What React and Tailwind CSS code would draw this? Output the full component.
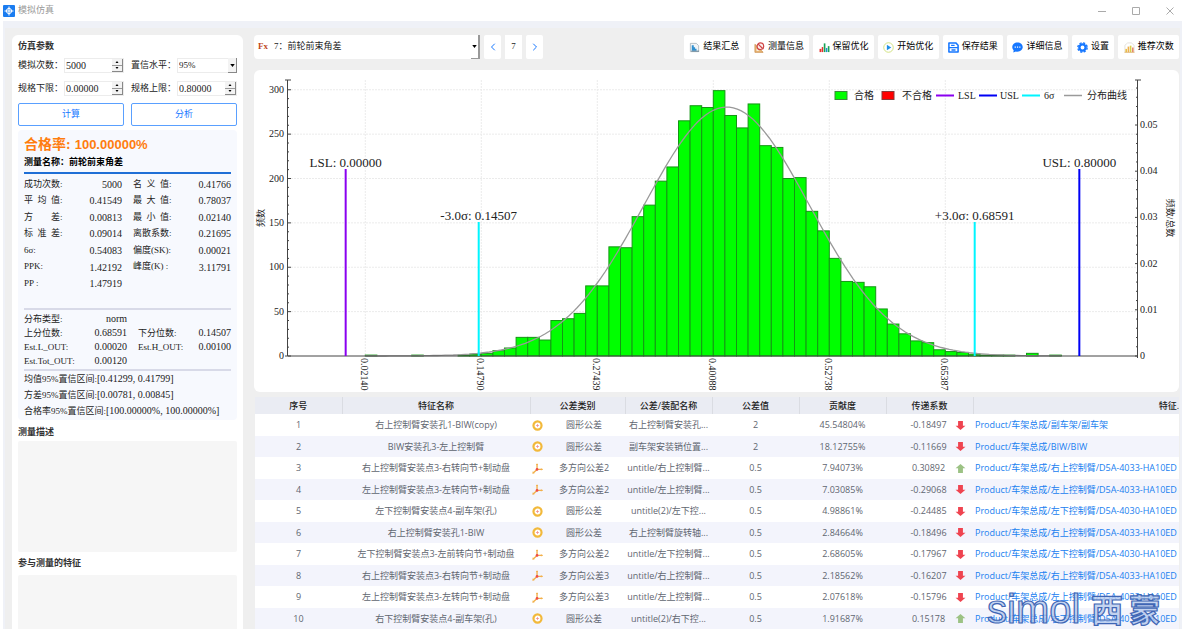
import { useState } from "react";
import { ChevronLeft, ChevronRight } from "lucide-react";

const BINS = [
  1, 0, 0, 0, 1, 0, 0, 0, 1, 2, 3, 6, 9, 21, 21, 18, 40, 42, 48, 79, 79, 123, 122, 157, 170, 197, 213, 265, 282, 280,
  299, 271, 257, 284, 237, 235, 200, 201, 163, 141, 110, 84, 83, 78, 53, 36, 25, 17, 15, 7, 5, 4, 2, 1, 1, 1, 0, 3, 0, 1,
];

const STATS = [
  ["成功次数:", "5000", "名\u2002义\u2002值:", "0.41766"],
  ["平\u2002均\u2002值:", "0.41549", "最\u2002大\u2002值:", "0.78037"],
  ["方\u3000\u3000差:", "0.00813", "最\u2002小\u2002值:", "0.02140"],
  ["标\u2002准\u2002差:", "0.09014", "离散系数:", "0.21695"],
  ["6σ:", "0.54083", "偏度(SK):", "0.00021"],
  ["PPK:", "1.42192", "峰度(K) :", "3.11791"],
  ["PP :", "1.47919", "", ""],
];

const DIST = [
  ["分布类型:", "norm", "", ""],
  ["上分位数:", "0.68591", "下分位数:", "0.14507"],
  ["Est.L_OUT:", "0.00020", "Est.H_OUT:", "0.00100"],
  ["Est.Tot_OUT:", "0.00120", "", ""],
];

const INTERVALS = [
  ["均值95%置信区间:", "[0.41299, 0.41799]"],
  ["方差95%置信区间:", "[0.00781, 0.00845]"],
  ["合格率95%置信区间:", "[100.00000%, 100.00000%]"],
];

const ROWS = [
  ["右上控制臂安装孔1-BIW(copy)", "圆形公差", "右上控制臂安装孔...", "2", "45.54804%", "-0.18497", "Product/车架总成/副车架/副车架"],
  ["BIW安装孔3-左上控制臂", "圆形公差", "副车架安装销位置...", "2", "18.12755%", "-0.11669", "Product/车架总成/BIW/BIW"],
  ["右上控制臂安装点3-右转向节+制动盘", "多方向公差2", "untitle/右上控制臂...", "0.5", "7.94073%", "0.30892", "Product/车架总成/右上控制臂/D5A-4033-HA10ED"],
  ["左上控制臂安装点3-左转向节+制动盘", "多方向公差2", "untitle/左上控制臂...", "0.5", "7.03085%", "-0.29068", "Product/车架总成/左上控制臂/D5A-4033-HA10ED"],
  ["左下控制臂安装点4-副车架(孔)", "圆形公差", "untitle(2)/左下控...", "0.5", "4.98861%", "-0.24485", "Product/车架总成/左下控制臂/D5A-4030-HA10ED"],
  ["右上控制臂安装孔1-BIW", "圆形公差", "右上控制臂旋转轴...", "0.5", "2.84664%", "-0.18496", "Product/车架总成/右上控制臂/D5A-4033-HA10ED"],
  ["左下控制臂安装点3-左前转向节+制动盘", "多方向公差2", "untitle/左下控制臂...", "0.5", "2.68605%", "-0.17967", "Product/车架总成/左下控制臂/D5A-4030-HA10ED"],
  ["右上控制臂安装点3-右转向节+制动盘", "多方向公差3", "untitle/右上控制臂...", "0.5", "2.18562%", "-0.16207", "Product/车架总成/右上控制臂/D5A-4033-HA10ED"],
  ["左上控制臂安装点3-左转向节+制动盘", "多方向公差3", "untitle/左上控制臂...", "0.5", "2.07618%", "-0.15796", "Product/车架总成/左上控制臂/D5A-4033-HA10ED"],
  ["右下控制臂安装点4-副车架(孔)", "圆形公差", "untitle(2)/右下控...", "0.5", "1.91687%", "0.15178", "Product/车架总成/右下控制臂/D5A-4030-HA10ED"],
];

const HEADERS = ["序号", "特征名称", "公差类别", "公差/装配名称", "公差值", "贡献度", "传递系数"];

// ---- toolbar icons, all on a 12x12 grid ----

const ICONS = {
  summary: (
    <>
      <path d="M1.5 1.5h6.5l2.5 2.5v6.5h-9z" fill="#f2f5f7" stroke="#a9b4bb" strokeWidth=".9" />
      <path d="M3 9.5v-6h2.2v2.2h1.4v1.6h1.6v2.2z" fill="#2f8fcf" />
      <path d="M2.5 10h8.5" stroke="#5f7d92" strokeWidth="1" />
    </>
  ),
  measure: (
    <>
      <path d="M1 2.5v8.8h9z" fill="#eab879" stroke="#c98a45" strokeWidth=".8" />
      <path d="M2.8 7v2.6h2.8z" fill="#fff" />
      <circle cx="7" cy="4.6" r="3.6" fill="#fbecec" stroke="#cf4444" strokeWidth="1.3" />
      <path d="M4.6 2.3l4.8 4.8" stroke="#cf4444" strokeWidth="1.3" />
    </>
  ),
  keep: (
    <>
      <path d="M.6 7.5h2V11h-2z" fill="#e5322d" />
      <path d="M3 5.5h1.6V11H3z" fill="#e5322d" />
      <path d="M5.2 1.5h1.8V11H5.2z" fill="#17a457" />
      <path d="M7.5 6.5h1.6V11H7.5z" fill="#1f8fd0" />
      <path d="M9.6 4.5h1.8V11H9.6z" fill="#17a457" />
    </>
  ),
  start: (
    <>
      <circle cx="6" cy="6" r="5.2" fill="#fff" stroke="#cfe07a" strokeWidth="1" />
      <path d="M4.2 3v6L9 6z" fill="#1e90e6" />
    </>
  ),
  save: (
    <>
      <path d="M1 1h7.5L11 3.5V11H1z" fill="none" stroke="#1677ff" strokeWidth="1.7" strokeLinejoin="round" />
      <path d="M3.4 3.7h3.8M1 6.2h10M3.8 8.7h4.4" stroke="#1677ff" strokeWidth="1.5" />
    </>
  ),
  detail: (
    <>
      <path d="M6 .5c3.2 0 5.7 2.2 5.7 5S9.2 10.6 6 10.6c-.6 0-1.2-.1-1.7-.2L1.4 11.5l.4-2.5C.8 8.1.3 6.9.3 5.5.3 2.7 2.8.5 6 .5z" fill="#1677ff" />
      <path d="M2.9 5.6h1.3M5.4 5.6h1.3M7.9 5.6h1.3" stroke="#fff" strokeWidth="1.3" />
    </>
  ),
  settings: (
    <>
      <circle cx="6" cy="6" r="3.4" fill="none" stroke="#1677ff" strokeWidth="2.6" />
      <circle cx="6" cy="6" r="5.1" fill="none" stroke="#1677ff" strokeWidth="1.5" strokeDasharray="2.4 1.605" />
    </>
  ),
  recommend: (
    <>
      <path d="M1 11V3.5L4 1h4l3 2.5V11" fill="none" stroke="#dcd9d2" strokeWidth=".8" />
      <path d="M1.5 7.5h1.8V11H1.5z" fill="#e9c04a" />
      <path d="M3.9 5h1.8v6H3.9z" fill="#efb04f" />
      <path d="M6.3 4h1.8v7H6.3z" fill="#d9cf4c" />
      <path d="M8.7 6h1.8v5H8.7z" fill="#e88a6c" />
      <path d="M.5 11.3h11" stroke="#d7a657" strokeWidth=".8" />
    </>
  ),
};

const TOOLS = [
  ["summary", "结果汇总"],
  ["measure", "测量信息"],
  ["keep", "保留优化"],
  ["start", "开始优化"],
  ["save", "保存结果"],
  ["detail", "详细信息"],
  ["settings", "设置"],
  ["recommend", "推荐次数"],
];

function CircleTolIcon() {
  return (
    <svg viewBox="0 0 12 12" className="size-[11px] shrink-0">
      <circle cx="6" cy="6" r="4.4" fill="#fff" stroke="#f2b93b" strokeWidth="2.4" />
      <path d="M6 4.3v3.4M4.3 6h3.4" stroke="#f08a8a" strokeWidth=".8" />
    </svg>
  );
}

function AxisTolIcon() {
  return (
    <svg viewBox="0 0 12 12" className="size-[11px] shrink-0">
      <path d="M5.5 1v6h6M5.5 7L1.3 10.8" fill="none" stroke="#f2b04a" strokeWidth="1.5" />
      <circle cx="5.5" cy="7" r="1.5" fill="#ef4b4b" />
      <path d="M4.3 2.3l1.2-2 1.2 2zM9.7 5.8l2.2 1.2-2.2 1.2zM.3 11.8l.6-2.8 2 2.2z" fill="#f2b04a" />
    </svg>
  );
}

function TrendIcon({ up }) {
  return (
    <svg viewBox="0 0 10 10" className="size-[11px] shrink-0">
      {up ? (
        <path d="M5 1l4.5 3.8H7.2V9H2.8V4.8H.5z" fill="#9cc284" />
      ) : (
        <path d="M5 9L.5 5.2h2.3V1h4.4v4.2h2.3z" fill="#ef4450" />
      )}
    </svg>
  );
}

function SpinBox({ id, label, initial, step, digits }) {
  const [value, setValue] = useState(initial);
  const bump = (d) => setValue((Number(value) + d * step).toFixed(digits));

  return (
    <div className="flex h-[15px] items-center">
      <label htmlFor={id} className="w-[46px] shrink-0 text-[9px]">{label}</label>
      <div className="flex h-full min-w-0 flex-1 border border-[#ececec] bg-white">
        <input
          id={id}
          value={value}
          onChange={(e) => setValue(e.target.value)}
          className="w-0 min-w-0 flex-1 pl-px text-[10px] outline-none"
        />
        <div className="flex w-[11px] flex-col border-r border-b border-[#888]">
          <button aria-label={`${label} +`} onClick={() => bump(1)} className="flex flex-1 items-center justify-center border-b border-[#999] bg-[#f3f3f3]">
            <svg viewBox="0 0 6 4" className="h-[2px] w-[4px]"><path d="M3 0l3 4H0z" /></svg>
          </button>
          <button aria-label={`${label} -`} onClick={() => bump(-1)} className="flex flex-1 items-center justify-center bg-[#f3f3f3]">
            <svg viewBox="0 0 6 4" className="h-[2px] w-[4px]"><path d="M3 4L0 0h6z" /></svg>
          </button>
        </div>
      </div>
    </div>
  );
}

function StatRow({ row, cols }) {
  return (
    <div className={`grid items-center justify-between ${cols}`}>
      <div className="flex items-center justify-between">
        <span className="text-[9px]">{row[0]}</span>
        <span>{row[1]}</span>
      </div>
      <div className="flex items-center justify-between">
        <span className="text-[9px]">{row[2]}</span>
        <span>{row[3]}</span>
      </div>
    </div>
  );
}

function SidePanel() {
  return (
    <aside className="flex w-[231px] shrink-0 flex-col rounded-t-md bg-white px-1.5 pt-1">
      <h2 className="text-[9px] leading-[14px] font-bold text-[#333]">仿真参数</h2>
      <div className="mt-[5px] grid grid-cols-2 gap-x-[7px] gap-y-2">
        <SpinBox id="times" label="模拟次数：" initial="5000" step={100} digits={0} />
        <div className="flex h-[15px] items-center">
          <label htmlFor="confidence" className="w-[46px] shrink-0 text-[9px]">置信水平：</label>
          <div className="relative h-full min-w-0 flex-1">
            <select id="confidence" className="block h-full w-full appearance-none border border-[#ececec] bg-white pl-px text-[9px] leading-[13px] outline-none">
              <option>95%</option>
              <option>99%</option>
            </select>
            <span className="pointer-events-none absolute inset-y-0 right-0 flex w-[9px] items-center justify-center border-r border-b border-[#888] bg-[#f3f3f3]">
              <svg viewBox="0 0 6 4" className="h-[3px] w-[5px]"><path d="M3 4L0 0h6z" /></svg>
            </span>
          </div>
        </div>
        <SpinBox id="lower" label="规格下限：" initial="0.00000" step={0.1} digits={5} />
        <SpinBox id="upper" label="规格上限：" initial="0.80000" step={0.1} digits={5} />
      </div>
      <div className="mt-[7px] grid grid-cols-2 gap-[7px] text-[9px] text-[#1677ff]">
        <button className="h-[23px] rounded-xs border border-[#5aa0ff]">计算</button>
        <button className="h-[23px] rounded-xs border border-[#5aa0ff]">分析</button>
      </div>

      <section className="mt-1 rounded bg-[#f7f9fe] px-1.5 pt-1.5 pb-px text-[10px]">
        <div className="flex items-center gap-1 text-[14px] leading-[18px] font-bold text-[#ff7d0f]">
          <span>合格率:</span>
          <span className="font-['Liberation_Sans',sans-serif] text-[13px]">100.00000%</span>
        </div>
        <div className="mt-px border-b-2 border-[#1f6fd6] pb-[3px] text-[9px] leading-[14px] font-bold text-black">
          测量名称：前轮前束角差
        </div>
        <div className="mt-0.5 grid h-[116px]">
          {STATS.map((row) => (
            <StatRow key={row[0]} row={row} cols="grid-cols-[98px_98px]" />
          ))}
        </div>
        <div className="mt-4 border-y-2 border-[#d8dae8] pt-0.5 pb-px leading-[14px]">
          {DIST.map((row) => (
            <StatRow key={row[0]} row={row} cols="grid-cols-[103px_93px]" />
          ))}
        </div>
        {INTERVALS.map(([name, range]) => (
          <div key={name} className="flex items-center leading-4">
            <span className="text-[9px]">{name}</span>
            <span>{range}</span>
          </div>
        ))}
      </section>

      <label htmlFor="desc" className="mt-[5px] text-[9px] leading-[14px] font-bold text-[#333]">测量描述</label>
      <textarea id="desc" className="mt-0.5 h-[111px] shrink-0 resize-none rounded-xs bg-[#f6f6f6] outline-none" />
      <label htmlFor="features" className="mt-1 text-[9px] leading-[14px] font-bold text-[#333]">参与测量的特征</label>
      <textarea id="features" className="mt-[5px] min-h-0 flex-1 resize-none rounded-t-xs bg-[#f6f6f6] outline-none" />
    </aside>
  );
}

function Toolbar() {
  return (
    <div className="flex h-6 items-stretch gap-1 text-[9px]">
      <div className="relative w-[226px]">
        <span className="pointer-events-none absolute inset-y-0 left-1 flex items-center text-[9px] font-bold text-[#c0481c]">Fx</span>
        <select aria-label="测量名称" className="block h-full w-full appearance-none rounded bg-white pl-5 text-[9px] outline-none">
          <option>7：前轮前束角差</option>
        </select>
        <span className="pointer-events-none absolute inset-y-0 right-0 flex w-[9px] items-center justify-center border-r-2 border-b border-[#999] bg-white">
          <svg viewBox="0 0 6 4" className="h-[3px] w-[5px]"><path d="M3 4L0 0h6z" /></svg>
        </span>
      </div>
      <button aria-label="上一个" className="flex w-[17px] items-center justify-center rounded-xs bg-white text-[#1677ff]">
        <ChevronLeft size={12} />
      </button>
      <span className="flex w-[17px] items-center justify-center bg-white">7</span>
      <button aria-label="下一个" className="flex w-[17px] items-center justify-center rounded-xs bg-white text-[#1677ff]">
        <ChevronRight size={12} />
      </button>
      <div className="ml-auto flex w-[495px] gap-1">
        {TOOLS.map(([icon, name]) => (
          <button key={icon} className="flex flex-auto items-center justify-center gap-[3px] rounded-xs bg-white px-[5px] text-black">
            <svg viewBox="0 0 12 12" className="size-[11px]">{ICONS[icon]}</svg>
            {name}
          </button>
        ))}
      </div>
    </div>
  );
}

const BASE = 286;
const UNIT = 0.8875;
const X0 = 111.3;
const BIN_W = 11.6;
const xOf = (v) => X0 + ((v - 0.0214) / 0.12649) * 116;

const curve = Array.from({ length: 175 }, (_, i) => {
  const x = X0 + i * 4;
  const z = (x - xOf(0.41549)) / 82.6;
  return `${x.toFixed(1)},${(BASE - 280.5 * UNIT * Math.exp((-z * z) / 2)).toFixed(1)}`;
}).join(" ");

function Marker({ value, top, color, label }) {
  const x = xOf(value);
  return (
    <g>
      <line x1={x} x2={x} y1={top} y2={BASE} stroke={color} strokeWidth="2" />
      <text x={x} y={top - 2} textAnchor="middle" fontSize="13">{label}</text>
    </g>
  );
}

function Histogram() {
  const legend = [
    [682, "#8a00f0", 704, "LSL"],
    [725, "#0000f5", 746, "USL"],
    [768, "#00f5ff", 790, "6σ"],
    [810, "#9a9a9a", 833, "分布曲线"],
  ];
  return (
    <svg viewBox="0 0 925 322" className="block h-auto w-full rounded-md bg-white" fill="#222">
      <g stroke="#ebebeb" strokeDasharray="2 1">
        {[50, 100, 150, 200, 250, 300].map((v) => (
          <line key={v} x1="34" x2="883" y1={BASE - v * UNIT} y2={BASE - v * UNIT} />
        ))}
        {[0, 1, 2, 3, 4, 5].map((i) => (
          <line key={i} x1={X0 + i * 116} x2={X0 + i * 116} y1="10" y2={BASE} />
        ))}
      </g>
      <g fill="#00ff00" stroke="#149614" strokeWidth="1">
        {BINS.map((n, i) =>
          n > 0 ? <rect key={i} x={X0 + i * BIN_W} y={BASE - n * UNIT} width={BIN_W} height={n * UNIT} /> : null
        )}
      </g>
      <polyline points={curve} fill="none" stroke="#999" strokeWidth="1.3" />

      <g stroke="#444">
        <path d="M33.5 286V10M31 10h6M31 286h852M883.5 288V10M881 10h6" fill="none" />
        {Array.from({ length: 31 }, (_, i) => (
          <line key={i} x1="34" x2={i % 5 ? 35 : 37} y1={BASE - i * 10 * UNIT} y2={BASE - i * 10 * UNIT} />
        ))}
        {Array.from({ length: 30 }, (_, i) => (
          <line key={i} x1={i % 5 ? 882 : 881} x2="884" y1={BASE - i * 9.24} y2={BASE - i * 9.24} />
        ))}
      </g>
      <g fontSize="10">
        {[0, 50, 100, 150, 200, 250, 300].map((v) => (
          <text key={v} x="30" y={BASE - v * UNIT + 3} textAnchor="end">{v}</text>
        ))}
        {["0", "0.01", "0.02", "0.03", "0.04", "0.05"].map((v, i) => (
          <text key={v} x="886" y={BASE - i * 46.2 + 3}>{v}</text>
        ))}
        {["0.02140", "0.14790", "0.27439", "0.40088", "0.52738", "0.65387"].map((v, i) => (
          <text key={v} transform={`translate(${X0 + i * 116 - 4} 288) rotate(90)`}>{v}</text>
        ))}
      </g>
      <text transform="translate(10 148) rotate(-90)" textAnchor="middle" fontSize="9">频数</text>
      <text transform="translate(913 148) rotate(90)" textAnchor="middle" fontSize="9">频数/总数</text>

      <Marker value={0} top={99} color="#8a00f0" label="LSL: 0.00000" />
      <Marker value={0.14507} top={152} color="#00f5ff" label="-3.0σ: 0.14507" />
      <Marker value={0.68591} top={152} color="#00f5ff" label="+3.0σ: 0.68591" />
      <Marker value={0.8} top={99} color="#0000f5" label="USL: 0.80000" />

      <g fontSize="10">
        <rect x="581" y="21.5" width="12" height="8" fill="#00ff00" stroke="#3a8a3a" />
        <text x="600" y="29">合格</text>
        <rect x="628" y="21.5" width="12" height="8" fill="#ff0000" stroke="#8a3a3a" />
        <text x="648" y="29">不合格</text>
        {legend.map(([x, color, tx, name]) => (
          <g key={name}>
            <line x1={x} x2={x + 18} y1="25.5" y2="25.5" stroke={color} strokeWidth={name === "分布曲线" ? 1.3 : 2} />
            <text x={tx} y="29">{name}</text>
          </g>
        ))}
      </g>
    </svg>
  );
}

function ContributionTable() {
  return (
    <div className="ml-px mt-[5px] overflow-hidden">
      <table className="w-full table-fixed border-collapse font-['Open_Sans','Noto_Sans_CJK_SC',sans-serif] text-[9px] whitespace-nowrap text-[#5f6670]">
        <colgroup>
          <col className="w-[87px]" />
          <col className="w-[188px]" />
          <col className="w-[95px]" />
          <col className="w-[87px]" />
          <col className="w-[87px]" />
          <col className="w-[87px]" />
          <col className="w-[87px]" />
          <col />
        </colgroup>
        <thead>
          <tr className="h-[17px] bg-[#eaecf3] text-[#222]">
            {HEADERS.map((h) => (
              <th key={h} className="border-r border-[#dadce2] p-0 font-medium">{h}</th>
            ))}
            <th className="p-0 text-right font-medium">特征.</th>
          </tr>
        </thead>
        <tbody>
          {ROWS.map(([name, type, part, tol, contrib, coef, path], i) => (
            <tr key={i} className="bg-white odd:h-[22px] even:h-[21px] even:bg-[#f3f4fc]">
              <td className="p-0 text-center">{i + 1}</td>
              <td className="p-0 text-center">{name}</td>
              <td className="p-0">
                <div className="flex items-center pl-0.5">
                  {type === "圆形公差" ? <CircleTolIcon /> : <AxisTolIcon />}
                  <span className="flex-1 text-center">{type}</span>
                </div>
              </td>
              <td className="p-0 text-center">{part}</td>
              <td className="p-0 text-center">{tol}</td>
              <td className="p-0 text-center">{contrib}</td>
              <td className="p-0">
                <div className="flex items-center pr-[7px] pl-4">
                  <span className="flex-1 text-center">{coef}</span>
                  <TrendIcon up={!coef.startsWith("-")} />
                </div>
              </td>
              <td className="overflow-hidden p-0 pl-0.5">
                <a href="#path" className="text-[#2080f0]">{path}</a>
              </td>
            </tr>
          ))}
        </tbody>
      </table>
    </div>
  );
}

function Watermark() {
  return (
    <svg
      viewBox="0 0 180 38"
      className="pointer-events-none absolute right-[15px] bottom-0 h-[38px] w-[180px]"
      fill="#b4c8ec"
      fillOpacity="0.8"
      stroke="#3f66b5"
      strokeWidth="1.2"
    >
      <text x="0" y="32" fontSize="40" fontFamily="Liberation Sans, sans-serif">simol</text>
      <text x="104" y="31" fontSize="32" fontWeight="700" fontFamily="Noto Sans CJK SC, sans-serif">西</text>
      <text x="142" y="31" fontSize="32" fontWeight="700" fontFamily="Noto Sans CJK SC, sans-serif">蒙</text>
    </svg>
  );
}

export default function App() {
  return (
    <div className="relative flex h-screen flex-col overflow-hidden bg-white font-['Liberation_Serif','Noto_Sans_CJK_SC',serif] text-[#222]">
      <header className="flex h-[21px] shrink-0 items-center pl-[3px] text-[9px] text-[#999]">
        <svg viewBox="0 0 12 12" className="mr-[3px] size-3">
          <rect width="12" height="12" rx="1" fill="#1a7cf0" />
          <circle cx="6" cy="6" r="2.6" fill="none" stroke="#fff" strokeWidth="1" />
          <path d="M6 1.5v9M1.5 6h9" stroke="#fff" strokeWidth="1.1" />
        </svg>
        <h1>模拟仿真</h1>
        <div className="ml-auto flex gap-[26px] pr-2">
          <button aria-label="最小化">
            <svg viewBox="0 0 8 8" className="size-2" stroke="#aaa"><path d="M0 4.5h8" /></svg>
          </button>
          <button aria-label="最大化">
            <svg viewBox="0 0 8 8" className="size-2" stroke="#aaa" fill="none"><path d="M.5.5h7v7h-7z" /></svg>
          </button>
          <button aria-label="关闭">
            <svg viewBox="0 0 8 8" className="size-2" stroke="#aaa"><path d="M.5.5l7 7M7.5.5l-7 7" /></svg>
          </button>
        </div>
      </header>
      <div className="ml-[3px] flex min-h-0 flex-1 gap-[11px] border-x-2 border-t-[7px] border-[#eff1f7] bg-[#efefef] pt-[7px] pr-px pl-[7px]">
        <SidePanel />
        <main className="min-w-0 flex-1">
          <Toolbar />
          <div className="mt-[11px]">
            <Histogram />
          </div>
          <ContributionTable />
        </main>
      </div>
      <Watermark />
    </div>
  );
}
